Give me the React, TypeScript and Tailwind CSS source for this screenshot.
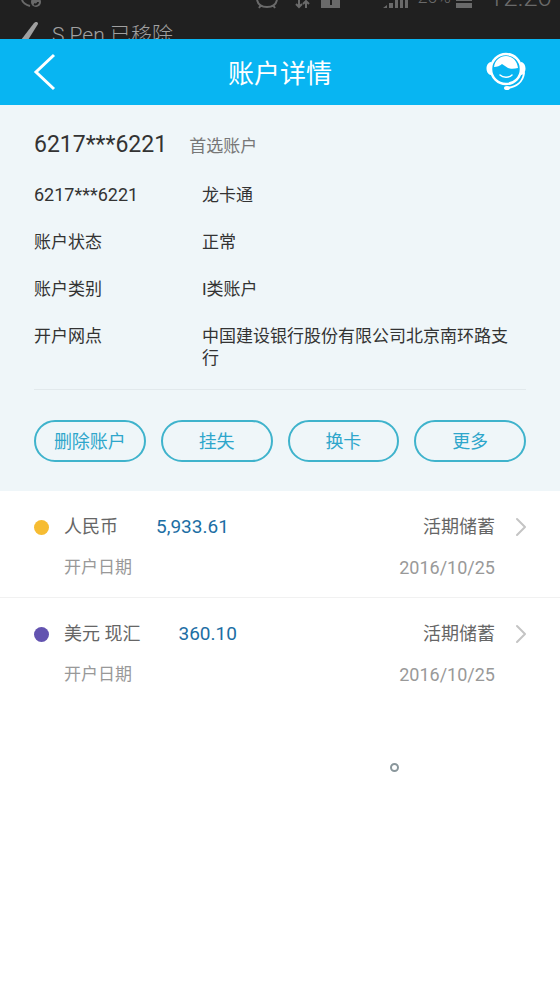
import { ChevronRight } from "lucide-react";

interface Detail {
  label: string;
  value: string;
  numeric?: boolean;
}

interface SubAccount {
  currency: string;
  amount: string;
  kind: string;
  openedAt: string;
  dotClass: string;
}

const details: Detail[] = [
  { label: "6217***6221", value: "龙卡通", numeric: true },
  { label: "账户状态", value: "正常" },
  { label: "账户类别", value: "I类账户" },
  { label: "开户网点", value: "中国建设银行股份有限公司北京南环路支行" },
];

const actions = ["删除账户", "挂失", "换卡", "更多"];

const subAccounts: SubAccount[] = [
  {
    currency: "人民币",
    amount: "5,933.61",
    kind: "活期储蓄",
    openedAt: "2016/10/25",
    dotClass: "bg-[#f6bc32]",
  },
  {
    currency: "美元 现汇",
    amount: "360.10",
    kind: "活期储蓄",
    openedAt: "2016/10/25",
    dotClass: "bg-[#6353b0]",
  },
];

function StatusBar() {
  return (
    <div className="flex h-[10px] items-end overflow-hidden pl-5 pr-2 text-[#6a6a6a]">
      <svg width="24" height="10" viewBox="0 0 24 10" fill="none" stroke="currentColor" strokeWidth="2">
        <path d="M2 0c1 3 4 5 8 6" />
        <circle cx="16" cy="2" r="5" fill="currentColor" stroke="none" />
        <path d="M14 4c2 1 4 0 4-2" stroke="#202020" />
      </svg>
      <svg className="ml-auto" width="86" height="10" viewBox="0 0 86 10" fill="none" stroke="currentColor" strokeWidth="2">
        <path d="M1 0c1 4 4 7 10 7s9-3 10-7M5 5 3 8M17 5l2 3" />
        <path d="M43 0v7M40 4l3 3 3-3M50 8V1M47 4l3-3 3 3" />
        <path d="M65 0h19v8H65z" fill="currentColor" stroke="none" />
        <path d="M75 0v5" stroke="#202020" />
      </svg>
      <svg className="ml-[41px]" width="26" height="10" viewBox="0 0 26 10" fill="currentColor">
        <path d="M0 8h4V5zM6 8h4V3H6zM12 8h3V0h-3zM17 8h3V0h-3zM22 8h3V0h-3z" />
      </svg>
      <span className="mb-1 ml-[9px] text-lg leading-[18px] font-light">20%</span>
      <svg className="ml-1" width="18" height="10" viewBox="0 0 18 10" fill="currentColor">
        <path d="M1 0h16v1H1zM1 3h16v5H1z" />
      </svg>
      <span className="ml-4 text-[26px] leading-[26px] font-light">12:20</span>
    </div>
  );
}

function Ticker() {
  return (
    <div className="flex h-[29px] items-start gap-3 overflow-hidden pl-5 pt-[11px] text-[#a0a0a0]">
      <svg width="20" height="20" viewBox="0 0 20 20" fill="currentColor">
        <path d="M1 19 14 2c1-1 4-2 4 1L8 19z" />
      </svg>
      <p className="text-[21px] leading-[28px] font-light">S Pen 已移除</p>
    </div>
  );
}

function ServiceIcon() {
  return (
    <svg width="42" height="40" viewBox="0 0 42 40" fill="none" stroke="#fff" strokeLinecap="round">
      <circle cx="21" cy="17" r="15" strokeWidth="2.5" />
      <path d="M9 15C10 8 15 4 21 4s11 4 12 12c-4 1-8 1-10 0l-6-4c-2 2-5 3-8 3z" fill="#fff" stroke="none" />
      <path d="M6 10c-6 1-6 12 0 13zM36 10c6 1 6 12 0 13z" fill="#fff" stroke="none" />
      <path d="M15 23c3 3 9 3 12 0" strokeWidth="1.5" />
      <path d="M39 21c-1 9-8 14-17 15" strokeWidth="2" />
      <ellipse cx="22" cy="36" rx="3" ry="2" fill="#fff" stroke="none" />
    </svg>
  );
}

function SubAccountRow({ account }: { account: SubAccount }) {
  return (
    <li className="border-b border-[#f1f1f1] pl-[34px] pr-7 last:border-b-0">
      <a href="#detail" className="flex h-[106px] flex-col gap-[17px] pt-6">
        <div className="flex h-6 items-center">
          <span className={`size-[15px] rounded-full ${account.dotClass}`} />
          <span className="ml-[15px] text-lg text-[#666]">{account.currency}</span>
          <span className="ml-[38px] text-[19px] text-[#1c6ea4]">{account.amount}</span>
          <span className="ml-auto text-lg text-[#666]">{account.kind}</span>
          <ChevronRight className="-mr-[5px] ml-[10px] text-[#c4c4c4]" size={32} strokeWidth={1.5} />
        </div>
        <div className="flex h-6 items-center justify-between pl-[30px] pr-[37px] text-[#999]">
          <span className="text-[17px]">开户日期</span>
          <span className="text-lg">{account.openedAt}</span>
        </div>
      </a>
    </li>
  );
}

export default function App() {
  return (
    <div className="min-h-screen bg-white font-[Roboto,'Noto_Sans_CJK_SC',sans-serif]">
      <div className="bg-[#202020]">
        <StatusBar />
        <Ticker />
      </div>

      <header className="flex h-[66px] items-center justify-between bg-[#08b5f2] px-[33px] text-white">
        <button type="button" aria-label="返回" className="w-[42px]">
          <svg width="24" height="38" viewBox="0 0 24 38" fill="none" stroke="currentColor" strokeWidth="3">
            <path d="M21 2 3 19l18 17" />
          </svg>
        </button>
        <h1 className="pt-1 text-[26px] leading-8">账户详情</h1>
        <button type="button" aria-label="客服">
          <ServiceIcon />
        </button>
      </header>

      <main>
        <section className="bg-[#eff6f9] px-[34px] pb-[29px] pt-[25px]">
          <div className="flex items-baseline gap-[22px]">
            <h2 className="text-[23px] leading-[30px] text-[#333]">6217***6221</h2>
            <span className="text-[17px] leading-6 text-[#777]">首选账户</span>
          </div>

          <dl className="mt-6 space-y-[25px] border-b border-[#e2e9ec] pb-5 text-[17px] leading-[22px] text-[#333]">
            {details.map((item) => (
              <div key={item.label} className="flex">
                <dt className={item.numeric ? "w-[168px] shrink-0 text-lg leading-[22px]" : "w-[168px] shrink-0"}>
                  {item.label}
                </dt>
                <dd className="pr-2">{item.value}</dd>
              </div>
            ))}
          </dl>

          <div className="mt-[30px] grid grid-cols-4 gap-[15px]">
            {actions.map((action) => (
              <button
                key={action}
                type="button"
                className="h-[42px] rounded-full border-2 border-[#3fb3cc] pt-[2px] text-lg text-[#2ea6cb]"
              >
                {action}
              </button>
            ))}
          </div>
        </section>

        <ul>
          {subAccounts.map((account) => (
            <SubAccountRow key={account.currency} account={account} />
          ))}
        </ul>

        <div className="flex justify-end pr-[161px] pt-[59px]">
          <span className="size-[9px] rounded-full border-2 border-[#8a979c]" />
        </div>
      </main>
    </div>
  );
}
